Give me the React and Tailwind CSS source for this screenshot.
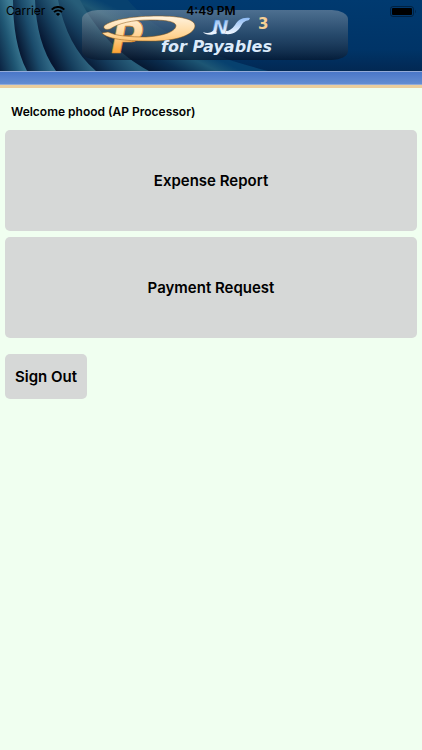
import React from 'react';

const menuItems = [
  { id: 'expense', title: 'Expense Report' },
  { id: 'payment', title: 'Payment Request' },
];

// curved drapes behind the logo, drawn from back to front
const folds = [
  { id: 'e', d: 'M0 0H128C150 28 200 54 268 71H0Z' },
  { id: 'd', d: 'M0 0H80C96 30 118 54 149 71H0Z' },
  { id: 'c', d: 'M0 0H58C64 30 76 54 96 71H0Z' },
  { id: 'b', d: 'M0 0H35C36 26 42 52 56 71H0Z' },
  { id: 'a', d: 'M0 0H13C13 26 17 52 27 71H0Z' },
];

function BannerArt() {
  return (
    <svg
      className="block h-[71px] w-full"
      viewBox="0 0 422 71"
      preserveAspectRatio="xMinYMin slice"
      role="img"
      aria-label="PN3 for Payables"
    >
      <defs>
        <linearGradient id="sky" x1="0" y1="0" x2="0" y2="1">
          <stop offset="0" stopColor="#003a70" />
          <stop offset="0.7" stopColor="#003467" />
          <stop offset="1" stopColor="#022853" />
        </linearGradient>
        <linearGradient id="fold-a" gradientUnits="userSpaceOnUse" x1="-8" y1="43" x2="18" y2="36">
          <stop offset="0" stopColor="#0a2140" />
          <stop offset="0.6" stopColor="#1f5673" />
          <stop offset="1" stopColor="#3d7b94" />
        </linearGradient>
        <linearGradient id="fold-b" gradientUnits="userSpaceOnUse" x1="18" y1="49" x2="46" y2="41">
          <stop offset="0" stopColor="#06142e" />
          <stop offset="0.55" stopColor="#1b4c6c" />
          <stop offset="1" stopColor="#356f8b" />
        </linearGradient>
        <linearGradient id="fold-c" gradientUnits="userSpaceOnUse" x1="48" y1="54" x2="78" y2="39">
          <stop offset="0" stopColor="#061631" />
          <stop offset="0.5" stopColor="#16405f" />
          <stop offset="1" stopColor="#306681" />
        </linearGradient>
        <linearGradient id="fold-d" gradientUnits="userSpaceOnUse" x1="83" y1="63" x2="109" y2="38">
          <stop offset="0" stopColor="#061631" />
          <stop offset="0.5" stopColor="#143b5b" />
          <stop offset="1" stopColor="#275d79" />
        </linearGradient>
        <linearGradient id="fold-e" gradientUnits="userSpaceOnUse" x1="160" y1="80" x2="180" y2="40">
          <stop offset="0" stopColor="#04132b" />
          <stop offset="0.4" stopColor="#0b2e50" />
          <stop offset="0.75" stopColor="#1d5674" />
          <stop offset="1" stopColor="#07416f" />
        </linearGradient>
        <linearGradient id="glass" x1="0" y1="0" x2="0" y2="1">
          <stop offset="0" stopColor="#9aa6b2" stopOpacity="0.5" />
          <stop offset="0.5" stopColor="#4b5b6c" stopOpacity="0.5" />
          <stop offset="1" stopColor="#061428" stopOpacity="0.65" />
        </linearGradient>
        <linearGradient id="gold" gradientUnits="userSpaceOnUse" x1="0" y1="16" x2="0" y2="54">
          <stop offset="0" stopColor="#fff3df" />
          <stop offset="0.5" stopColor="#ffd596" />
          <stop offset="1" stopColor="#f9a12f" />
        </linearGradient>
        <linearGradient id="ice" gradientUnits="userSpaceOnUse" x1="0" y1="18" x2="0" y2="34">
          <stop offset="0" stopColor="#8fbcf4" />
          <stop offset="1" stopColor="#f1f7ff" />
        </linearGradient>
      </defs>

      <rect width="422" height="71" fill="url(#sky)" />
      {folds.map((fold) => (
        <path key={fold.id} d={fold.d} fill={`url(#fold-${fold.id})`} />
      ))}

      <rect x="82" y="10" width="266" height="50" rx="16" ry="9" fill="url(#glass)" />

      <text
        x="111"
        y="53"
        fontSize="44"
        fontWeight="700"
        fontStyle="italic"
        fill="url(#gold)"
        stroke="#d98a2b"
        strokeWidth="0.6"
        className="font-['DejaVu_Sans',sans-serif]"
      >
        P
      </text>
      {/* swoosh around the initial */}
      <path
        d="M104 26C112 19 136 16 158 16C180 16 195 19 195 26C194 36 172 42 146 41C126 41 107 39 102 33L108 32C116 36 130 37 146 37C163 36 175 32 176 26C176 21 164 20 150 20C132 20 119 23 110 29C106 30 103 29 104 26Z"
        fill="url(#gold)"
        stroke="#8a5410"
        strokeWidth="0.5"
      />

      <text
        x="212"
        y="34"
        fontSize="20"
        fontWeight="700"
        fontStyle="italic"
        fill="url(#ice)"
        stroke="#2f6fb5"
        strokeWidth="0.4"
        className="font-['DejaVu_Sans',sans-serif]"
      >
        N
      </text>
      <path
        d="M203 32C207 34 211 33 214 30L217 33C212 36 205 35 203 32ZM225 34C234 35 238 31 241 26C243 22 245 21 249 20L250 18C242 17 238 20 235 25C232 29 229 31 226 31Z"
        fill="url(#ice)"
      />

      <text
        x="258"
        y="29"
        fontSize="15"
        fontWeight="700"
        fill="#f6cf94"
        className="font-['DejaVu_Sans',sans-serif]"
      >
        3
      </text>
      <text
        x="161"
        y="52"
        fontSize="16"
        fontWeight="700"
        fontStyle="italic"
        fill="#dcebfb"
        className="font-['DejaVu_Sans',sans-serif]"
      >
        for Payables
      </text>
    </svg>
  );
}

function StatusBar() {
  return (
    <div className="absolute inset-x-0 top-0 grid h-[22px] grid-cols-3 items-center px-[6px] text-xs text-black">
      <div className="flex items-center gap-[6px]">
        <span>Carrier</span>
        <svg className="h-[10px] w-[14px]" viewBox="0 0 14 10" fill="none" stroke="currentColor" strokeWidth="2">
          <path d="M0.7 3.6C4.3 0.1 9.7 0.1 13.3 3.6" />
          <path d="M3 6.1C5.3 3.9 8.7 3.9 11 6.1" />
          <path d="M7 10L4.9 7.9C6.1 6.8 7.9 6.8 9.1 7.9Z" fill="currentColor" stroke="none" />
        </svg>
      </div>
      <span className="text-center font-semibold">4:49 PM</span>
      <svg className="h-[11px] w-[26px] justify-self-end" viewBox="0 0 26 11">
        <rect x="0.5" y="0.5" width="23" height="10" rx="2.5" fill="none" stroke="#000" strokeOpacity="0.4" />
        <rect x="2" y="2" width="20" height="7" rx="1" fill="#000" />
        <path d="M25 3.8V7.2C26 6.8 26 4.2 25 3.8Z" fill="#000" fillOpacity="0.4" />
      </svg>
    </div>
  );
}

export default function App() {
  return (
    <div className="min-h-screen bg-[#f0fff0] font-[Inter,sans-serif] text-black">
      <header className="relative">
        <BannerArt />
        <div className="h-[14px] border-y border-[#93abd8] bg-linear-to-b from-[#4a77c8] to-[#648dd2]" />
        <div className="h-[3px] bg-[#ecce9c]" />
        <StatusBar />
      </header>

      <main className="px-[5px] pt-[14px]">
        <h1 className="px-[6px] text-xs leading-5 font-semibold">Welcome phood (AP Processor)</h1>

        <div className="mt-2 flex flex-col gap-[6px]">
          {menuItems.map((item) => (
            <button
              key={item.id}
              type="button"
              className="h-[101px] w-full rounded-[5px] bg-[#d6d8d7] pt-[2px] text-[15px] font-semibold"
            >
              {item.title}
            </button>
          ))}
        </div>

        <button
          type="button"
          className="mt-4 rounded-[5px] bg-[#d6d8d7] px-[10px] pt-[11px] pb-[10px] text-[15px] leading-6 font-semibold"
        >
          Sign Out
        </button>
      </main>
    </div>
  );
}
